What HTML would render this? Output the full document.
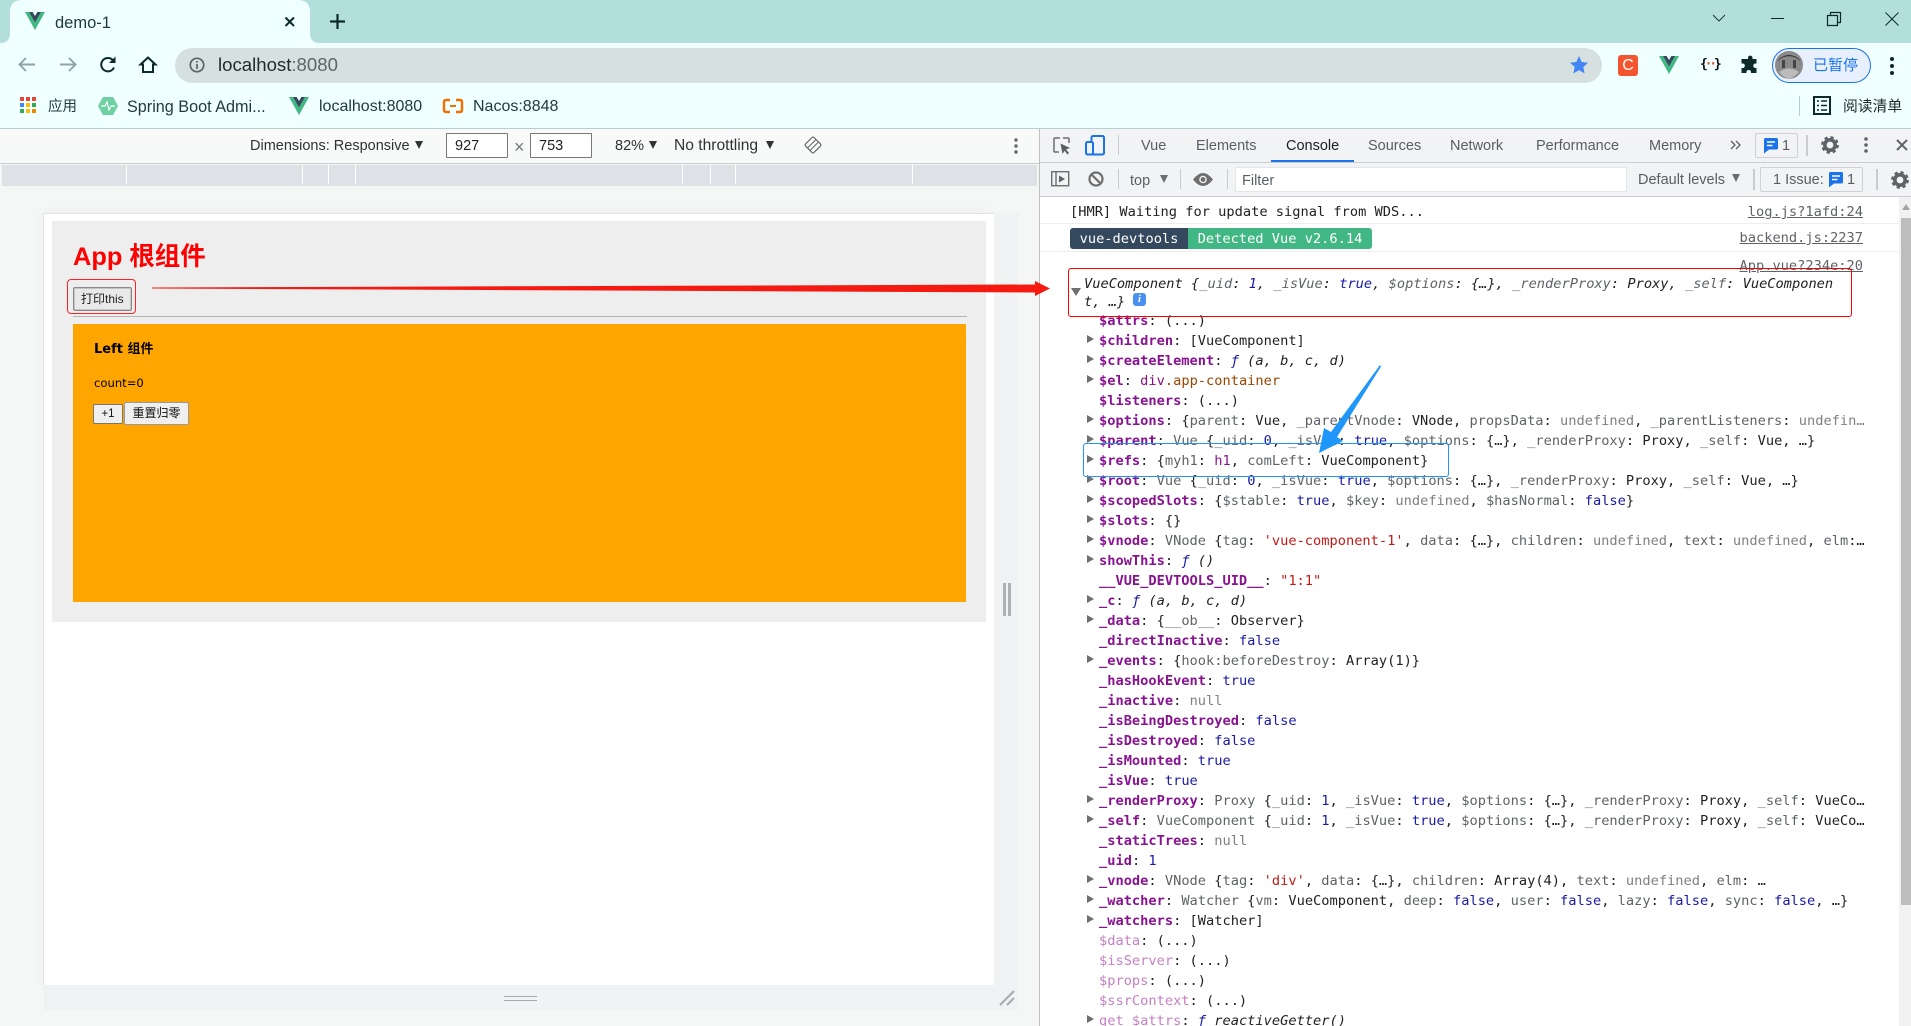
<!DOCTYPE html>
<html lang="zh"><head><meta charset="utf-8"><title>demo-1</title>
<style>
html,body{margin:0;padding:0;width:1911px;height:1026px;overflow:hidden;background:#fff}
body{position:relative;font-family:"Liberation Sans","Noto Sans CJK SC",sans-serif;color:#202124}
.b{position:absolute}
.t{position:absolute;white-space:pre;line-height:20px;height:20px}
.s{font-size:14.5px;color:#5a5e63;margin-top:1px}
.m{font-family:"DejaVu Sans Mono","Liberation Mono",monospace;font-size:13.68px;color:#222}
.l{position:absolute;left:1099px;width:770px;overflow:hidden;white-space:pre;line-height:20px;height:20px;margin-top:1px;font-family:"DejaVu Sans Mono","Liberation Mono",monospace;font-size:13.68px;color:#222}
.l i{font-style:italic}
.n{color:#881391;font-weight:bold}
.d{color:#c481c4}
.k{color:#5f6368}
.v{color:#1a1aa6}
.r{color:#c41a16}
.u{color:#808080}
.o{color:#994500}
.tri:before{content:"";position:absolute;left:-12px;top:4px;border-left:7px solid #6e6e6e;border-top:4.5px solid transparent;border-bottom:4.5px solid transparent}
.tw{overflow:visible}
.lnk{color:#5f6368;text-decoration:underline;text-align:right}
svg{position:absolute;overflow:visible}
.sep{position:absolute;width:1px;background:#c9cccf}
</style></head><body>

<!-- browser chrome -->
<div class="b" style="left:0;top:0;width:1911px;height:43px;background:#b2dfdb"></div>
<div class="b" style="left:0;top:43px;width:1911px;height:85px;background:#f0ffff"></div>
<div class="b" style="left:0;top:128px;width:1911px;height:1px;background:#b6cfd0"></div>
<svg style="left:0;top:0" width="330" height="43"><path d="M0 43Q10 43 10 33V12Q10 0 22 0H298Q310 0 310 12V33Q310 43 320 43Z" fill="#f0ffff"/></svg>
<svg style="left:25px;top:12px" width="20" height="18" viewBox="0 0 20 18"><path d="M0 0L10 18L20 0H16L10 10.5L4 0Z" fill="#41b883"/><path d="M4 0L10 10.5L16 0H12.4L10 4L7.6 0Z" fill="#35495e"/></svg>
<div class="t" style="left:55px;top:13px;font-size:16.5px;color:#1f3a3a">demo-1</div>
<svg style="left:284px;top:16px" width="12" height="12"><path d="M1.5 1.5L10 10M10 1.5L1.5 10" stroke="#0d2a2a" stroke-width="2"/></svg>
<svg style="left:330px;top:14px" width="16" height="16"><path d="M7.5 0V15M0 7.5H15" stroke="#0d2a2a" stroke-width="2.2"/></svg>
<svg style="left:1712px;top:14px" width="14" height="8"><path d="M1 1L7 7L13 1" fill="none" stroke="#1d3b3b" stroke-width="1"/></svg>
<div class="b" style="left:1771px;top:18px;width:13px;height:1px;background:#0d2a2a"></div>
<svg style="left:1827px;top:12px" width="14" height="14"><path d="M.5 3.5H10.5V13.5H.5ZM3.5 3.5V.5H13.5V10.5H10.5" fill="none" stroke="#0d2a2a" stroke-width="1.2"/></svg>
<svg style="left:1885px;top:12px" width="14" height="14"><path d="M.5 .5L13.5 13.5M13.5 .5L.5 13.5" stroke="#0d2a2a" stroke-width="1"/></svg>

<svg style="left:18px;top:56px" width="18" height="18"><path d="M17 8.5H2M8 2L1.5 8.5L8 15" fill="none" stroke="#8fa3a3" stroke-width="1.9"/></svg>
<svg style="left:59px;top:56px" width="18" height="18"><path d="M1 8.5H16M10 2L16.5 8.5L10 15" fill="none" stroke="#8fa3a3" stroke-width="1.9"/></svg>
<svg style="left:99px;top:56px" width="18" height="18"><path d="M15 11.5A6.7 6.7 0 1 1 14.2 4.5" fill="none" stroke="#0d2a2a" stroke-width="2"/><path d="M16.5 .5V7H10Z" fill="#0d2a2a"/></svg>
<svg style="left:139px;top:56px" width="18" height="18"><path d="M9 1.5L1.5 8.5H4V16H14V8.5H16.5Z" fill="none" stroke="#0d2a2a" stroke-width="2"/></svg>
<div class="b" style="left:175px;top:48px;width:1427px;height:35px;border-radius:18px;background:#d5e0df"></div>
<svg style="left:189px;top:57px" width="16" height="16"><circle cx="8" cy="8" r="6.7" fill="none" stroke="#5a6666" stroke-width="1.7"/><path d="M8 7V12M8 4V5.6" stroke="#5a6666" stroke-width="1.7"/></svg>
<div class="t" style="left:218px;top:55px;font-size:18.6px;color:#1f2a2a">localhost<span style="color:#5c6868">:8080</span></div>
<svg style="left:1570px;top:56px" width="18" height="18"><path d="M9 0L11.7 6L18 6.7L13.3 11L14.6 17.4L9 14.2L3.4 17.4L4.7 11L0 6.7L6.3 6Z" fill="#4285f4"/></svg>
<div class="b" style="left:1618px;top:55px;width:20px;height:21px;border-radius:3px;background:#f4552f;color:#fff;font-size:16px;line-height:21px;text-align:center">C</div>
<svg style="left:1659px;top:56px" width="20" height="18" viewBox="0 0 20 18"><path d="M0 0L10 18L20 0H16L10 10.5L4 0Z" fill="#41b883"/><path d="M4 0L10 10.5L16 0H12.4L10 4L7.6 0Z" fill="#35495e"/></svg>
<div class="t" style="left:1700px;top:55px;font-size:13px;font-weight:bold;color:#111;font-family:'DejaVu Sans Mono',monospace;letter-spacing:-3.2px">{<span style="color:#e8562a">··</span>}</div>
<svg style="left:1740px;top:56px" width="18" height="18"><path d="M6 3H8V1.5A2.3 2.3 0 0 1 12.5 1.5V3H16.5V7.5H15.5A2.2 2.2 0 0 0 15.5 12H16.5V17H11V15.8A2.3 2.3 0 0 0 6.5 15.8V17H1.5V12H3A2.3 2.3 0 0 0 3 7.5H1.5V3Z" fill="#0d2a2a"/></svg>
<div class="b" style="left:1772px;top:48px;width:97px;height:33px;border:1px solid #1a73e8;border-radius:18px;background:#e8f0fe"></div>
<svg style="left:1775px;top:51px" width="28" height="28"><circle cx="14" cy="14" r="14" fill="#8a8a8a"/><path d="M2 12C6 3 22 3 26 12L24 8Q14 0 4 8Z" fill="#333"/><rect x="7" y="9" width="3" height="8" fill="#444"/><rect x="18" y="9" width="3" height="8" fill="#444"/><path d="M4 21Q14 14 24 21Q18 27 14 28Q9 27 4 21Z" fill="#bbb"/></svg>
<div class="t" style="left:1813px;top:56px;font-size:15px;color:#1a73e8">已暂停</div>
<svg style="left:1889px;top:56px" width="6" height="20"><circle cx="3" cy="3" r="2" fill="#0d2a2a"/><circle cx="3" cy="10" r="2" fill="#0d2a2a"/><circle cx="3" cy="17" r="2" fill="#0d2a2a"/></svg>

<svg style="left:20px;top:97px" width="17" height="17"><g><rect width="4" height="4" fill="#ea4335"/><rect x="6" width="4" height="4" fill="#ea4335"/><rect x="12" width="4" height="4" fill="#ea4335"/><rect y="6" width="4" height="4" fill="#4285f4"/><rect x="6" y="6" width="4" height="4" fill="#fbbc05"/><rect x="12" y="6" width="4" height="4" fill="#34a853"/><rect y="12" width="4" height="4" fill="#34a853"/><rect x="6" y="12" width="4" height="4" fill="#fbbc05"/><rect x="12" y="12" width="4" height="4" fill="#ea8a00"/></g></svg>
<div class="t" style="left:48px;top:97px;font-size:14.5px;color:#1f3a3a">应用</div>
<svg style="left:98px;top:97px" width="20" height="18"><path d="M5 0H15L20 9L15 18H5L0 9Z" fill="#6cd0a2"/><path d="M3 9H7L9 5L11 13L13 9H17" fill="none" stroke="#fff" stroke-width="1.2"/></svg>
<div class="t" style="left:127px;top:97px;font-size:16.2px;color:#1f3a3a">Spring Boot Admi...</div>
<svg style="left:289px;top:97px" width="20" height="18" viewBox="0 0 20 18"><path d="M0 0L10 18L20 0H16L10 10.5L4 0Z" fill="#41b883"/><path d="M4 0L10 10.5L16 0H12.4L10 4L7.6 0Z" fill="#35495e"/></svg>
<div class="t" style="left:319px;top:97px;font-size:16px;color:#1f3a3a">localhost:8080</div>
<svg style="left:443px;top:99px" width="20" height="14"><path d="M7 1H3Q1 1 1 3V11Q1 13 3 13H7M13 1H17Q19 1 19 3V11Q19 13 17 13H13" fill="none" stroke="#f76d00" stroke-width="2.4"/><path d="M7 7H13" stroke="#f76d00" stroke-width="2"/></svg>
<div class="t" style="left:473px;top:97px;font-size:16px;color:#1f3a3a">Nacos:8848</div>
<div class="b" style="left:1799px;top:96px;width:1px;height:20px;background:#b9caca"></div>
<svg style="left:1813px;top:96px" width="18" height="19"><rect x="1" y="1" width="16" height="17" fill="none" stroke="#0d2a2a" stroke-width="2"/><path d="M4 5H6M8 5H14M4 9.5H6M8 9.5H14M4 14H6M8 14H14" stroke="#0d2a2a" stroke-width="1.6"/></svg>
<div class="t" style="left:1843px;top:97px;font-size:14.8px;color:#1f2a2a">阅读清单</div>

<!-- device toolbar / emulation -->
<div class="b" style="left:0;top:129px;width:1039px;height:34px;background:#f8f9f9"></div>
<div class="b" style="left:0;top:163px;width:1039px;height:1px;background:#cbcdd0"></div>
<div class="b" style="left:0;top:164px;width:1039px;height:862px;background:#f5f7f7"></div>
<div class="t s" style="left:250px;top:135px;color:#303235">Dimensions: Responsive</div>
<div class="b" style="left:415px;top:141px;border-top:8px solid #333;border-left:4px solid transparent;border-right:4px solid transparent"></div>
<div class="b" style="left:446px;top:133px;width:60px;height:23px;border:1px solid #777;background:#fff;border-radius:1px"></div>
<div class="t s" style="left:455px;top:135px;color:#222">927</div>
<div class="t" style="left:514px;top:137px;color:#777;font-size:18px">×</div>
<div class="b" style="left:530px;top:133px;width:60px;height:23px;border:1px solid #777;background:#fff;border-radius:1px"></div>
<div class="t s" style="left:539px;top:135px;color:#222">753</div>
<div class="t s" style="left:615px;top:135px;color:#303235">82%</div>
<div class="b" style="left:649px;top:141px;border-top:8px solid #333;border-left:4px solid transparent;border-right:4px solid transparent"></div>
<div class="t s" style="left:674px;top:135px;color:#303235;font-size:15.6px">No throttling</div>
<div class="b" style="left:766px;top:141px;border-top:8px solid #333;border-left:4px solid transparent;border-right:4px solid transparent"></div>
<svg style="left:804px;top:136px" width="18" height="18"><rect x="3" y="3" width="12" height="12" rx="1.5" transform="rotate(45 9 9)" fill="none" stroke="#666" stroke-width="1.1"/><path d="M3.5 12L12 3.5M6 14.5L14.5 6" stroke="#666" stroke-width="1"/></svg>
<svg style="left:1013px;top:137px" width="6" height="18"><circle cx="3" cy="3" r="1.7" fill="#666"/><circle cx="3" cy="9" r="1.7" fill="#666"/><circle cx="3" cy="15" r="1.7" fill="#666"/></svg>
<div class="b" style="left:2px;top:165px;width:1035px;height:21px;background:#dee1e6"></div>
<div class="b" style="left:126px;top:165px;width:1px;height:19px;background:#fff"></div>
<div class="b" style="left:302px;top:165px;width:1px;height:19px;background:#fff"></div>
<div class="b" style="left:328px;top:165px;width:1px;height:19px;background:#fff"></div>
<div class="b" style="left:355px;top:165px;width:1px;height:19px;background:#fff"></div>
<div class="b" style="left:682px;top:165px;width:1px;height:19px;background:#fff"></div>
<div class="b" style="left:710px;top:165px;width:1px;height:19px;background:#fff"></div>
<div class="b" style="left:735px;top:165px;width:1px;height:19px;background:#fff"></div>
<div class="b" style="left:912px;top:165px;width:1px;height:19px;background:#fff"></div>

<!-- page viewport -->
<div class="b" style="left:43px;top:213px;width:951px;height:772px;border:1px solid #e2e2e2;border-bottom:0;border-right:0;box-sizing:border-box;background:#fff;box-shadow:0 0 12px rgba(0,0,0,.04)"></div>
<div class="b" style="left:994px;top:213px;width:25px;height:797px;background:#f0f2f3"></div>
<div class="b" style="left:44px;top:985px;width:975px;height:25px;background:#f0f2f3"></div>
<div class="b" style="left:1003px;top:583px;width:3px;height:33px;background:#aeb0b1"></div>
<div class="b" style="left:1008px;top:583px;width:3px;height:33px;background:#aeb0b1"></div>
<div class="b" style="left:504px;top:996px;width:33px;height:1px;background:#aaa"></div>
<div class="b" style="left:504px;top:1000px;width:33px;height:1px;background:#aaa"></div>
<svg style="left:999px;top:990px" width="18" height="18"><path d="M1 15L15 1M8 15L15 8" stroke="#a9a9a9" stroke-width="2"/></svg>
<div class="b" style="left:52px;top:221px;width:934px;height:401px;background:#eee"></div>
<div class="t" style="left:73px;top:241px;height:32px;line-height:32px;font-size:25.4px;font-weight:bold;color:#f00">App 根组件</div>
<div class="b" style="left:67px;top:279px;width:67px;height:33px;border:1px solid #f22;border-radius:4px"></div>
<div class="b" style="left:73px;top:287px;width:57px;height:22px;border:1px solid #8a8a8a;border-radius:2px;background:#e9e9e9;box-shadow:inset 0 0 0 1px #c4c4c4"></div>
<div class="t" style="left:81px;top:289px;font-size:12px;color:#222">打印this</div>
<div class="b" style="left:73px;top:316px;width:894px;height:1px;background:#b4b4b4"></div>
<div class="b" style="left:73px;top:324px;width:893px;height:278px;background:#ffa500"></div>
<div class="t" style="left:94px;top:340px;font-family:'DejaVu Sans','Noto Sans CJK SC',sans-serif;font-size:13px;font-weight:bold;color:#000">Left 组件</div>
<div class="t" style="left:94px;top:373px;font-family:'DejaVu Sans',sans-serif;font-size:11.6px;color:#000">count=0</div>
<div class="b" style="left:93px;top:404px;width:28px;height:18px;border:1px solid #767676;border-radius:2px;background:#efefef;font-size:11.5px;line-height:18px;text-align:center;color:#111">+1</div>
<div class="b" style="left:124px;top:402px;width:63px;height:21px;border:1px solid #999;border-radius:2px;background:#efefef;font-size:12px;line-height:21px;text-align:center;color:#111">重置归零</div>

<!-- devtools -->
<div class="b" style="left:1039px;top:129px;width:1px;height:897px;background:#c0c0c0"></div>
<div class="b" style="left:1040px;top:129px;width:871px;height:33px;background:#f1f3f4"></div>
<div class="b" style="left:1040px;top:162px;width:871px;height:1px;background:#cbcdd0"></div>
<div class="b" style="left:1040px;top:163px;width:871px;height:33px;background:#f1f3f4"></div>
<div class="b" style="left:1040px;top:196px;width:871px;height:1px;background:#cbcdd0"></div>
<svg style="left:1053px;top:137px" width="18" height="18"><path d="M7 1H2Q1 1 1 2V14Q1 15 2 15H6M10 1H15Q16 1 16 2V6" fill="none" stroke="#6e6e6e" stroke-width="1.5"/><path d="M7.5 6.5L17 11L13 12.5L16 16L14.5 17.5L11.5 13.8L9.5 17Z" fill="#5a5e63"/></svg>
<svg style="left:1085px;top:135px" width="20" height="20"><rect x="6.5" y="1" width="12.5" height="18.5" rx="1.5" fill="none" stroke="#1a73e8" stroke-width="2"/><rect x="1" y="7" width="7" height="12.5" rx="1.5" fill="#f1f3f4" stroke="#1a73e8" stroke-width="2"/></svg>
<div class="sep" style="left:1118px;top:135px;height:20px"></div>
<div class="t s" style="left:1141px;top:135px">Vue</div>
<div class="t s" style="left:1196px;top:135px">Elements</div>
<div class="t s" style="left:1286px;top:135px;color:#202124">Console</div>
<div class="b" style="left:1271px;top:160px;width:83px;height:2px;background:#1a73e8"></div>
<div class="t s" style="left:1368px;top:135px">Sources</div>
<div class="t s" style="left:1450px;top:135px">Network</div>
<div class="t s" style="left:1536px;top:135px">Performance</div>
<div class="t s" style="left:1649px;top:135px">Memory</div>
<svg style="left:1730px;top:140px" width="12" height="10"><path d="M1 1L5 5L1 9M6 1L10 5L6 9" fill="none" stroke="#5f6368" stroke-width="1.3"/></svg>
<div class="b" style="left:1755px;top:133px;width:43px;height:25px;box-sizing:border-box;border:1px solid #cfd1d4;border-radius:2px"></div>
<svg style="left:1764px;top:138px" width="14" height="16"><path d="M1.5 0H12.5Q14 0 14 1.5V10Q14 11.5 12.5 11.5H5L0 15.5V1.5Q0 0 1.5 0Z" fill="#1a73e8"/><path d="M3 4H11M3 7.5H8.5" stroke="#fff" stroke-width="1.4"/></svg>
<div class="t s" style="left:1782px;top:135px">1</div>
<div class="sep" style="left:1806px;top:135px;height:21px;width:2px"></div>
<svg style="left:1821px;top:136px" width="18" height="18"><circle cx="9" cy="9" r="5.2" fill="none" stroke="#5f6368" stroke-width="3.6"/><circle cx="9" cy="9" r="7.6" fill="none" stroke="#5f6368" stroke-width="2.6" stroke-dasharray="3.2 2.8"/></svg>
<svg style="left:1863px;top:136px" width="6" height="18"><circle cx="3" cy="3" r="1.8" fill="#5f6368"/><circle cx="3" cy="9" r="1.8" fill="#5f6368"/><circle cx="3" cy="15" r="1.8" fill="#5f6368"/></svg>
<svg style="left:1896px;top:139px" width="12" height="12"><path d="M1 1L11 11M11 1L1 11" stroke="#5f6368" stroke-width="2"/></svg>

<svg style="left:1051px;top:171px" width="18" height="16"><rect x=".7" y=".7" width="17" height="14" fill="none" stroke="#6e6e6e" stroke-width="1.4"/><path d="M5 1V15" stroke="#6e6e6e" stroke-width="1.4"/><path d="M8 4.5L14 8L8 11.5Z" fill="#5f6368"/></svg>
<svg style="left:1088px;top:171px" width="16" height="16"><circle cx="8" cy="8" r="6.5" fill="none" stroke="#6e6e6e" stroke-width="2.2"/><path d="M3.5 3.5L12.5 12.5" stroke="#6e6e6e" stroke-width="2.2"/></svg>
<div class="sep" style="left:1118px;top:169px;height:20px"></div>
<div class="t s" style="left:1130px;top:170px">top</div>
<div class="b" style="left:1160px;top:175px;border-top:8px solid #6e6e6e;border-left:4px solid transparent;border-right:4px solid transparent"></div>
<div class="sep" style="left:1180px;top:169px;height:20px"></div>
<svg style="left:1193px;top:173px" width="20" height="13"><path d="M0 6.5Q10 -6.5 20 6.5Q10 19.5 0 6.5Z" fill="#6e6e6e"/><circle cx="10" cy="6.5" r="3.8" fill="#f1f3f4"/><circle cx="10" cy="6.5" r="2.4" fill="#6e6e6e"/></svg>
<div class="sep" style="left:1227px;top:169px;height:20px"></div>
<div class="b" style="left:1235px;top:167px;width:392px;height:25px;background:#fff;box-sizing:border-box;border:1px solid #e4e6e8"></div>
<div class="t s" style="left:1242px;top:170px">Filter</div>
<div class="t s" style="left:1638px;top:169px">Default levels</div>
<div class="b" style="left:1732px;top:174px;border-top:8px solid #6e6e6e;border-left:4px solid transparent;border-right:4px solid transparent"></div>
<div class="sep" style="left:1753px;top:169px;height:21px;width:2px"></div>
<div class="b" style="left:1760px;top:167px;width:103px;height:25px;box-sizing:border-box;border:1px solid #cfd1d4;border-radius:2px"></div>
<div class="t s" style="left:1773px;top:169px">1 Issue:</div>
<svg style="left:1829px;top:172px" width="14" height="16"><path d="M1.5 0H12.5Q14 0 14 1.5V10Q14 11.5 12.5 11.5H5L0 15.5V1.5Q0 0 1.5 0Z" fill="#1a73e8"/><path d="M3 4H11M3 7.5H8.5" stroke="#fff" stroke-width="1.4"/></svg>
<div class="t s" style="left:1847px;top:169px">1</div>
<div class="sep" style="left:1876px;top:169px;height:21px;width:2px"></div>
<svg style="left:1891px;top:171px" width="18" height="18"><circle cx="9" cy="9" r="5.2" fill="none" stroke="#5f6368" stroke-width="3.6"/><circle cx="9" cy="9" r="7.6" fill="none" stroke="#5f6368" stroke-width="2.6" stroke-dasharray="3.2 2.8"/></svg>

<!-- console -->
<div class="t m" style="left:1070px;top:202px">[HMR] Waiting for update signal from WDS...</div>
<div class="b" style="left:1040px;top:223px;width:859px;height:1px;background:#eee"></div>
<div class="b" style="left:1040px;top:251px;width:859px;height:1px;background:#eee"></div>
<div class="b m" style="left:1070px;top:228px;width:118px;height:21px;line-height:22px;background:#35495e;color:#fff;text-align:center;border-radius:3px 0 0 3px">vue-devtools</div>
<div class="b m" style="left:1188px;top:228px;width:184px;height:21px;line-height:22px;background:#41b883;color:#fff;text-align:center;border-radius:0 3px 3px 0">Detected Vue v2.6.14</div>
<div class="t m lnk" style="right:48px;top:202px">log.js?1afd:24</div>
<div class="t m lnk" style="right:48px;top:228px">backend.js:2237</div>
<div class="t m lnk" style="right:48px;top:256px">App.vue?234e:20</div>

<div class="b" style="left:1899px;top:197px;width:12px;height:829px;background:#f1f1f1"></div>
<div class="b" style="left:1901px;top:218px;width:10px;height:687px;background:#bdbdbd"></div>
<div class="b" style="left:1902px;top:204px;border-bottom:6px solid #a3a3a3;border-left:4px solid transparent;border-right:4px solid transparent"></div>

<div class="l" style="left:1084px;top:273px;width:780px"><i>VueComponent {<span class="k">_uid</span>: <span class="v">1</span>, <span class="k">_isVue</span>: <span class="v">true</span>, <span class="k">$options</span>: {…}, <span class="k">_renderProxy</span>: Proxy, <span class="k">_self</span>: VueComponen</i></div>
<div class="l" style="left:1084px;top:291px;width:50px"><i>t, …}</i></div>
<div class="b" style="left:1071px;top:288px;border-top:8px solid #6e6e6e;border-left:5px solid transparent;border-right:5px solid transparent"></div>
<div class="b" style="left:1133px;top:293px;width:13px;height:13px;border-radius:3px;background:#4a90f0;color:#fff;font-size:11px;line-height:13px;text-align:center;font-style:italic;font-weight:bold;font-family:'Liberation Serif',serif">i</div>
<div class="l" style="top:310px"><span class="n">$attrs</span>: (...)</div>
<div class="b" style="left:1068px;top:268px;width:784px;height:49px;box-sizing:border-box;border:1px solid #f00;border-radius:3px"></div>

<div class="l tw tri" style="top:330px"><span class="n">$children</span>: [VueComponent]</div>
<div class="l tw tri" style="top:350px"><span class="n">$createElement</span>: <i><span class="v">ƒ</span> (a, b, c, d)</i></div>
<div class="l tw tri" style="top:370px"><span class="n">$el</span>: <span style="color:#881280">div</span><span class="o">.app-container</span></div>
<div class="l" style="top:390px"><span class="n">$listeners</span>: (...)</div>
<div class="l tw tri" style="top:410px"><span class="n">$options</span>: {<span class="k">parent</span>: Vue, <span class="k">_parentVnode</span>: VNode, <span class="k">propsData</span>: <span class="u">undefined</span>, <span class="k">_parentListeners</span>: <span class="u">undefin…</span></div>
<div class="l tw tri" style="top:430px"><span class="n">$parent</span>: <span class="k">Vue</span> {<span class="k">_uid</span>: <span class="v">0</span>, <span class="k">_isVue</span>: <span class="v">true</span>, <span class="k">$options</span>: {…}, <span class="k">_renderProxy</span>: Proxy, <span class="k">_self</span>: Vue, …}</div>
<div class="l tw tri" style="top:450px"><span class="n">$refs</span>: {<span class="k">myh1</span>: <span class="o" style="color:#881391">h1</span>, <span class="k">comLeft</span>: VueComponent}</div>
<div class="l tw tri" style="top:470px"><span class="n">$root</span>: <span class="k">Vue</span> {<span class="k">_uid</span>: <span class="v">0</span>, <span class="k">_isVue</span>: <span class="v">true</span>, <span class="k">$options</span>: {…}, <span class="k">_renderProxy</span>: Proxy, <span class="k">_self</span>: Vue, …}</div>
<div class="l tw tri" style="top:490px"><span class="n">$scopedSlots</span>: {<span class="k">$stable</span>: <span class="v">true</span>, <span class="k">$key</span>: <span class="u">undefined</span>, <span class="k">$hasNormal</span>: <span class="v">false</span>}</div>
<div class="l tw tri" style="top:510px"><span class="n">$slots</span>: {}</div>
<div class="l tw tri" style="top:530px"><span class="n">$vnode</span>: <span class="k">VNode</span> {<span class="k">tag</span>: <span class="r">'vue-component-1'</span>, <span class="k">data</span>: {…}, <span class="k">children</span>: <span class="u">undefined</span>, <span class="k">text</span>: <span class="u">undefined</span>, <span class="k">elm</span>:…</div>
<div class="l tw tri" style="top:550px"><span class="n">showThis</span>: <i><span class="v">ƒ</span> ()</i></div>
<div class="l" style="top:570px"><span class="n">__VUE_DEVTOOLS_UID__</span>: <span class="r">"1:1"</span></div>
<div class="l tw tri" style="top:590px"><span class="n">_c</span>: <i><span class="v">ƒ</span> (a, b, c, d)</i></div>
<div class="l tw tri" style="top:610px"><span class="n">_data</span>: {<span class="k">__ob__</span>: Observer}</div>
<div class="l" style="top:630px"><span class="n">_directInactive</span>: <span class="v">false</span></div>
<div class="l tw tri" style="top:650px"><span class="n">_events</span>: {<span class="k">hook:beforeDestroy</span>: Array(1)}</div>
<div class="l" style="top:670px"><span class="n">_hasHookEvent</span>: <span class="v">true</span></div>
<div class="l" style="top:690px"><span class="n">_inactive</span>: <span class="u">null</span></div>
<div class="l" style="top:710px"><span class="n">_isBeingDestroyed</span>: <span class="v">false</span></div>
<div class="l" style="top:730px"><span class="n">_isDestroyed</span>: <span class="v">false</span></div>
<div class="l" style="top:750px"><span class="n">_isMounted</span>: <span class="v">true</span></div>
<div class="l" style="top:770px"><span class="n">_isVue</span>: <span class="v">true</span></div>
<div class="l tw tri" style="top:790px"><span class="n">_renderProxy</span>: <span class="k">Proxy</span> {<span class="k">_uid</span>: <span class="v">1</span>, <span class="k">_isVue</span>: <span class="v">true</span>, <span class="k">$options</span>: {…}, <span class="k">_renderProxy</span>: Proxy, <span class="k">_self</span>: VueCo…</div>
<div class="l tw tri" style="top:810px"><span class="n">_self</span>: <span class="k">VueComponent</span> {<span class="k">_uid</span>: <span class="v">1</span>, <span class="k">_isVue</span>: <span class="v">true</span>, <span class="k">$options</span>: {…}, <span class="k">_renderProxy</span>: Proxy, <span class="k">_self</span>: VueCo…</div>
<div class="l" style="top:830px"><span class="n">_staticTrees</span>: <span class="u">null</span></div>
<div class="l" style="top:850px"><span class="n">_uid</span>: <span class="v">1</span></div>
<div class="l tw tri" style="top:870px"><span class="n">_vnode</span>: <span class="k">VNode</span> {<span class="k">tag</span>: <span class="r">'div'</span>, <span class="k">data</span>: {…}, <span class="k">children</span>: Array(4), <span class="k">text</span>: <span class="u">undefined</span>, <span class="k">elm</span>: …</div>
<div class="l tw tri" style="top:890px"><span class="n">_watcher</span>: <span class="k">Watcher</span> {<span class="k">vm</span>: VueComponent, <span class="k">deep</span>: <span class="v">false</span>, <span class="k">user</span>: <span class="v">false</span>, <span class="k">lazy</span>: <span class="v">false</span>, <span class="k">sync</span>: <span class="v">false</span>, …}</div>
<div class="l tw tri" style="top:910px"><span class="n">_watchers</span>: [Watcher]</div>
<div class="l" style="top:930px"><span class="d">$data</span>: (...)</div>
<div class="l" style="top:950px"><span class="d">$isServer</span>: (...)</div>
<div class="l" style="top:970px"><span class="d">$props</span>: (...)</div>
<div class="l" style="top:990px"><span class="d">$ssrContext</span>: (...)</div>
<div class="l tw tri" style="top:1010px"><span class="d">get $attrs</span>: <i><span class="v">ƒ</span> reactiveGetter()</i></div>

<!-- annotations -->
<div class="b" style="left:1083px;top:443px;width:366px;height:34px;box-sizing:border-box;border:1px solid #1e96fa;border-radius:3px"></div>
<svg style="left:0;top:0" width="1911" height="1026">
<path d="M152 287.5L600 286L1035 284.5V281L1050 288.5L1035 296V292.5L600 290.5L152 288.5Z" fill="#f41a12"/>
<path d="M1380 365L1381 366.5L1337 437L1343 441L1319 453L1324 428L1331 432Z" fill="#1e96fa"/>
</svg>
</body></html>
